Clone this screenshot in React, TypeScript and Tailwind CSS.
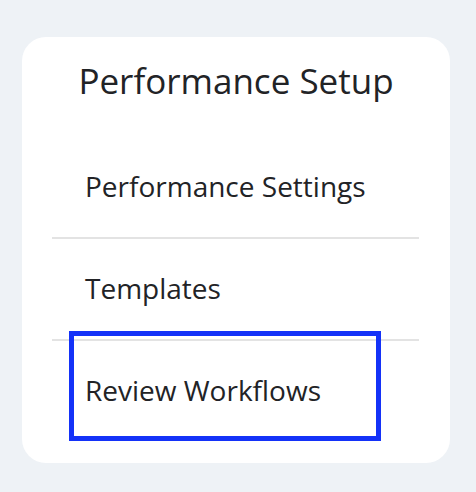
import React from "react";

const items = ["Performance Settings", "Templates", "Review Workflows"];

export default function App() {
  return (
    <div className="w-[476px] h-[492px] bg-[#eef2f6] pt-[37px] px-[22px] font-['Open_Sans','Noto_Sans',sans-serif]">
      <div className="relative w-[428px] h-[426px] rounded-[24px] bg-white pt-[20px]">
        <h1 className="text-center text-[35px] leading-[48px] text-[#222326] font-normal mb-[32px]">
          Performance Setup
        </h1>
        <ul className="ml-[30px] mr-[31px]">
          {items.map((label, i) => (
            <li
              key={label}
              className={
                i < items.length - 1
                  ? "pt-[30px] pb-[32px] pl-[33px] text-[28px] leading-[38px] text-[#222326] border-b-2 border-[#e3e3e3]"
                  : "pt-[30px] pb-[32px] pl-[33px] text-[28px] leading-[38px] text-[#222326]"
              }
            >
              {label}
            </li>
          ))}
        </ul>
        <div className="absolute left-[47px] top-[294px] w-[312px] h-[110px] border-[5px] border-[#1432f8] pointer-events-none" />
      </div>
    </div>
  );
}
